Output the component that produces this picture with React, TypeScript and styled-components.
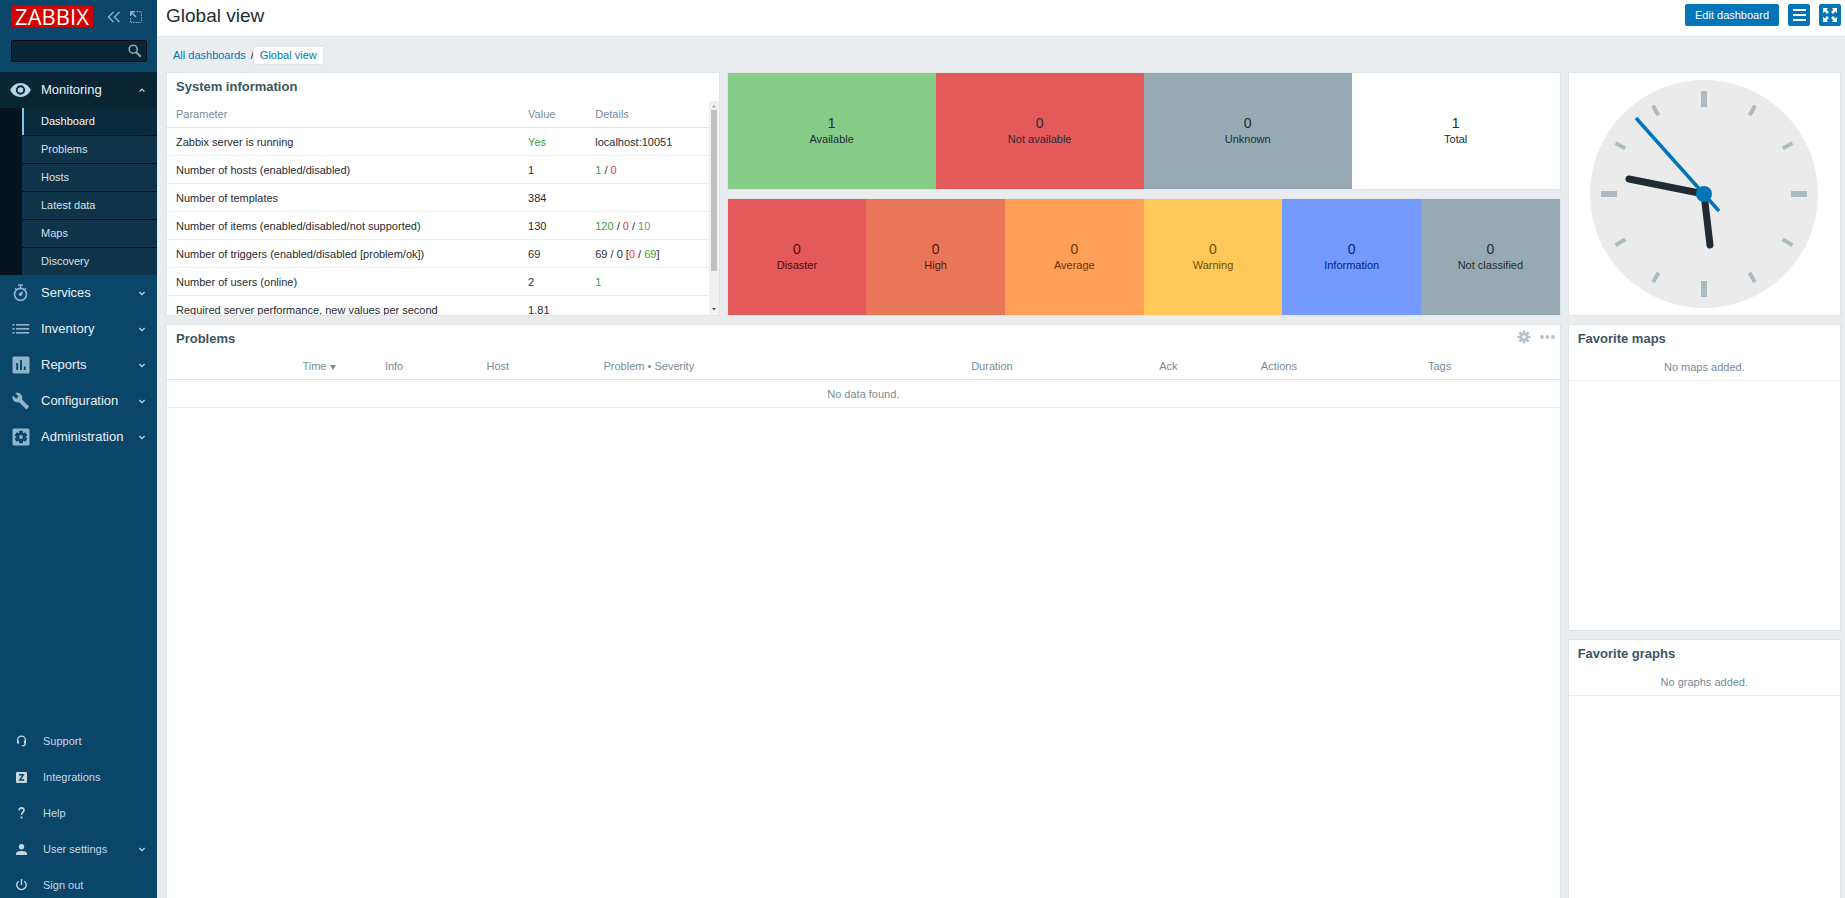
import React from "react";
import styled, { createGlobalStyle, css } from "styled-components";

const GlobalStyle = createGlobalStyle`
  * { box-sizing: border-box; }
  html, body, #root { height: 100%; }
  body {
    margin: 0;
    font-family: Arial, "Liberation Sans", sans-serif;
    font-size: 11px;
    line-height: 13px;
    color: #1f2c33;
    background: #e9edf0;
  }
  ul { list-style: none; margin: 0; padding: 0; }
  a { text-decoration: none; color: #0275b8; }
  h1, h4 { margin: 0; }
  button { font: inherit; cursor: pointer; }
`;

const Page = styled.div`
  display: flex;
  height: 100vh;
  overflow: hidden;
`;

/* Sidebar */

const Sidebar = styled.aside`
  flex: 0 0 157px;
  display: flex;
  flex-direction: column;
  background: #0a466a;
  color: #e9f1f6;
  overflow: hidden;
`;

const SidebarHeader = styled.div`
  display: flex;
  align-items: center;
  height: 33px;
  padding: 0 15px 0 11px;
`;

const Logo = styled.a`
  width: 82px;
  height: 21px;
  margin-right: 14px;
  background: #d40000;
  color: #fff;
  font-family: "Open Sans", "Noto Sans", sans-serif;
  font-size: 22px;
  line-height: 21px;
  text-align: center;
`;

const SidebarButton = styled.button`
  display: flex;
  padding: 0;
  border: 0;
  background: none;
  color: #8fb4ca;
  & + & { margin-left: 9px; }
`;

const SearchForm = styled.form`
  display: flex;
  align-items: center;
  height: 22px;
  margin: 7px 10px 10px 11px;
  padding-right: 4px;
  background: #0a2635;
  border: 1px solid #020c13;
  border-radius: 2px;
`;

const SearchInput = styled.input`
  flex: 1;
  min-width: 0;
  height: 20px;
  padding: 0 6px;
  border: 0;
  outline: 0;
  background: transparent;
  color: #e9f1f6;
  font: inherit;
`;

const MenuLink = styled.a<{ $open?: boolean }>`
  display: flex;
  align-items: center;
  height: 36px;
  padding: 0 11px 0 10px;
  font-size: 13px;
  line-height: 16px;
  color: #e9f1f6;
  svg:first-child { color: ${(p) => (p.$open ? "#b3d4ea" : "#8fb4ca")}; }
  ${(p) => p.$open && css`background: #0a2635;`}
`;

const MenuIcon = styled.span`
  display: flex;
  flex: 0 0 31px;
`;

const MenuLabel = styled.span`
  flex: 1;
`;

const SubMenu = styled.ul`
  padding-left: 22px;
  background: #04131c;
`;

const SubItem = styled.li`
  background: #0f3349;
  & + & { margin-top: 1px; }
`;

const SubLink = styled.a<{ $selected?: boolean }>`
  display: block;
  height: 27px;
  padding-left: 17px;
  border-left: 2px solid ${(p) => (p.$selected ? "#7dc5f5" : "transparent")};
  background: ${(p) => (p.$selected ? "#0a2a3d" : "transparent")};
  line-height: 27px;
  color: ${(p) => (p.$selected ? "#f2f7fa" : "#d5e0e8")};
`;

const UserMenu = styled.ul`
  margin: auto 0 -5px;
`;

const UserLink = styled.a`
  display: flex;
  align-items: center;
  height: 36px;
  padding: 0 11px 0 16px;
  color: #c6d7e2;
`;

const UserIcon = styled.span`
  display: flex;
  flex: 0 0 27px;
`;

/* Page content */

const Content = styled.div`
  flex: 1;
  min-width: 0;
  overflow-y: auto;
  scrollbar-width: none;
`;

const Header = styled.header`
  display: flex;
  align-items: center;
  height: 37px;
  padding: 0 4px 6px 9px;
  background: #fff;
  border-bottom: 1px solid #dfe4e7;
`;

const Title = styled.h1`
  flex: 1;
  padding-top: 2px;
  font-size: 19px;
  line-height: 24px;
  font-weight: normal;
`;

const HeaderButton = styled.button<{ $icon?: boolean }>`
  display: flex;
  align-items: center;
  justify-content: center;
  width: ${(p) => (p.$icon ? "22px" : "94px")};
  height: 22px;
  margin-left: 9px;
  padding: 0;
  border: 1px solid #0275b8;
  border-radius: 2px;
  background: #0275b8;
  color: #fff;
  line-height: 12px;
`;

const Crumbs = styled.nav`
  display: flex;
  align-items: center;
  height: 17px;
  margin: 10px 0 8px 16px;
`;

const CurrentCrumb = styled.a`
  height: 17px;
  padding: 0 6px;
  line-height: 17px;
  background: #fff;
  box-shadow: 0 0 0 1px #e2e7ea;
`;

const Slash = styled.span`
  margin-left: 5px;
`;

const Dashboard = styled.main`
  display: grid;
  grid-template-columns: repeat(6, 1fr);
  grid-auto-rows: 55px;
  gap: 8px 7px;
  padding: 0 4px 8px 9px;
`;

const Widget = styled.section<{ $cols: number; $rows: number }>`
  grid-column: span ${(p) => p.$cols};
  grid-row: span ${(p) => p.$rows};
  display: flex;
  flex-direction: column;
  min-width: 0;
  background: #fff;
  border: 1px solid #dfe4e7;
  overflow: hidden;
`;

const WidgetHead = styled.div`
  display: flex;
  align-items: center;
  height: 28px;
  padding: 0 5px 0 9px;
  flex: none;
`;

const WidgetTitle = styled.h4`
  flex: 1;
  font-size: 13px;
  line-height: 16px;
  color: #3c5563;
`;

const WidgetTool = styled.button`
  display: flex;
  padding: 0 0 4px;
  margin-left: 9px;
  border: 0;
  background: none;
  color: #b5c2ca;
`;

const ScrollArea = styled.div`
  display: flex;
  flex: 1;
  min-height: 0;
`;

const ScrollView = styled.div`
  flex: 1;
  overflow: hidden;
`;

const ScrollTrack = styled.div`
  display: flex;
  flex-direction: column;
  align-items: center;
  justify-content: space-between;
  width: 10px;
  padding: 4px 0;
  background: #f1f1f1;
`;

const ScrollThumb = styled.div`
  width: 6px;
  height: 161px;
  margin: 2px 0 auto;
  background: #c1c1c1;
`;

const Table = styled.table`
  width: 100%;
  border-collapse: separate;
  border-spacing: 0;
  table-layout: fixed;
`;

const Th = styled.th`
  height: 27px;
  padding: 0 0 0 9px;
  border-bottom: 1px solid #dfe4e7;
  color: #768d99;
  font-weight: normal;
  text-align: left;
  white-space: nowrap;
`;

const ThRight = styled(Th)`
  text-align: right;
`;

const Td = styled.td`
  height: 28px;
  padding: 2px 0 0 9px;
  border-bottom: 1px solid #ebeef0;
  white-space: nowrap;
`;

const Empty = styled.td`
  height: 28px;
  padding: 2px 0 0;
  border-bottom: 1px solid #ebeef0;
  color: #768d99;
  text-align: center;
`;

const Green = styled.span`
  color: #429e47;
`;
const Red = styled.span`
  color: #e33734;
`;
const Grey = styled.span`
  color: #768d99;
`;

const Tiles = styled.div`
  display: flex;
  flex: 1;
`;

const Tile = styled.div<{ $bg: string; $fg: string }>`
  flex: 1 1 0;
  display: flex;
  flex-direction: column;
  align-items: center;
  justify-content: center;
  padding-bottom: 4px;
  background: ${(p) => p.$bg};
  color: ${(p) => p.$fg};
`;

const Count = styled.span`
  font-size: 14px;
  line-height: 20px;
`;

const ClockBox = styled.div`
  flex: 1;
  display: flex;
  align-items: center;
  justify-content: center;
`;

/* Icons */

const Chevron = ({ up }: { up?: boolean }) => (
  <svg width="8" height="6" viewBox="0 0 8 6" fill="none" stroke="#c4d8e4" strokeWidth="1.2" aria-hidden="true">
    <path d={up ? "M1.6 4.6 4 2.200 6.400 4.600" : "M1.400 2 4 4.600 6.600 2"} />
  </svg>
);

const EyeIcon = () => (
  <svg width="21" height="14" viewBox="1 4.500 22 15" fill="currentColor" aria-hidden="true">
    <path d="M12 4.500C7 4.500 2.700 7.600 1 12c1.700 4.400 6 7.500 11 7.500s9.300-3.100 11-7.500C21.300 7.600 17 4.500 12 4.500zM12 17a5 5 0 1 1 0-10 5 5 0 0 1 0 10zm0-8a3 3 0 1 0 0 6 3 3 0 0 0 0-6z" />
  </svg>
);

const StopwatchIcon = () => (
  <svg width="20" height="18" viewBox="0 0 20 18" fill="none" stroke="currentColor" aria-hidden="true">
    <circle cx="10.500" cy="10.300" r="6" strokeWidth="1.700" />
    <path d="M8 1h5M10.500 1v3M5.100 4.300l1.200 1.200M15.900 4.300l-1.200 1.200" strokeWidth="1.600" />
    <path d="M13.300 7.200 12 11a1.700 1.700 0 1 1-2.300-2.200z" fill="currentColor" stroke="none" />
  </svg>
);

const ListIcon = () => (
  <svg width="20" height="12" viewBox="0 0 20 12" fill="currentColor" aria-hidden="true">
    {[1, 5, 9].map((y) => (
      <React.Fragment key={y}>
        <rect x="2.500" y={y} width="2" height="1.600" />
        <rect x="6" y={y} width="13.200" height="1.600" />
      </React.Fragment>
    ))}
  </svg>
);

const ReportIcon = () => (
  <svg width="20" height="18" viewBox="0 0 20 18" aria-hidden="true">
    <rect x="2.500" y="0.500" width="17" height="17" rx="1.600" fill="currentColor" />
    <path d="M7.200 7v7M11 4v10M14.800 10.500V14" stroke="#0a466a" strokeWidth="1.900" />
  </svg>
);

const WrenchIcon = () => (
  <svg width="20" height="18" viewBox="-2 0 26 24" preserveAspectRatio="xMidYMid meet" fill="currentColor" aria-hidden="true">
    <path d="M22.700 19l-9.100-9.100c.9-2.300.4-5-1.500-6.900-2-2-5-2.400-7.400-1.300L9 6 6 9 1.600 4.700C.4 7.100.9 10.100 2.900 12.100c1.900 1.900 4.600 2.400 6.900 1.500l9.100 9.100c.4.4 1 .4 1.400 0l2.300-2.300c.5-.4.5-1.100.1-1.400z" />
  </svg>
);

const AdminIcon = () => (
  <svg width="20" height="18" viewBox="0 0 20 18" aria-hidden="true">
    <rect x="2.500" y="0.500" width="17" height="17" rx="1.600" fill="currentColor" />
    {[0, 60, 120].map((a) => (
      <rect key={a} x="9" y="2.800" width="4" height="12.400" rx="0.600" fill="#0a466a" transform={`rotate(${a} 11 9)`} />
    ))}
    <circle cx="11" cy="9" r="4.600" fill="#0a466a" />
    <circle cx="11" cy="9" r="1.900" fill="currentColor" />
  </svg>
);

const SearchIcon = () => (
  <svg width="14" height="14" viewBox="0 0 14 14" fill="none" stroke="#8fa9b8" aria-hidden="true">
    <circle cx="5.200" cy="5.200" r="4" strokeWidth="1.600" />
    <path d="M8.200 8.200 12.800 12.800" strokeWidth="2" />
  </svg>
);

const CollapseIcon = () => (
  <svg width="14" height="12" viewBox="0 0 14 12" fill="none" stroke="currentColor" strokeWidth="1.400" aria-hidden="true">
    <path d="M6.500 1 1.500 6l5 5M12.500 1l-5 5 5 5" />
  </svg>
);

const CompactIcon = () => (
  <svg width="12" height="12" viewBox="0 0 12 12" fill="none" stroke="currentColor" aria-hidden="true">
    <path d="M6.500 .6h5M11.400 1v10.400M.6 11.400H11M.6 7v4" strokeWidth="1" strokeDasharray="1.500 1" />
    <path d="M.8 5V.8H5M1 1l5 5" strokeWidth="1.500" />
  </svg>
);

const HeadsetIcon = () => (
  <svg width="11" height="12" viewBox="0 0 11 12" fill="none" stroke="currentColor" aria-hidden="true">
    <path d="M1.600 6.500V5a3.900 3.900 0 0 1 7.800 0v3.300c0 1.700-1 2.600-3.400 2.700" strokeWidth="1.200" />
    <path d="M2 5.500v3M9 5.500v3" strokeWidth="2" />
  </svg>
);

const IntegrationIcon = () => (
  <svg width="11" height="11" viewBox="0 0 11 11" aria-hidden="true">
    <rect width="11" height="11" rx="1" fill="currentColor" />
    <path d="M3 2.800h4.200L3.800 8h4.300" fill="none" stroke="#0a466a" strokeWidth="1.500" />
  </svg>
);

const HelpIcon = () => (
  <svg width="11" height="12" viewBox="0 0 11 12" fill="none" stroke="currentColor" aria-hidden="true">
    <path d="M3 3.600C3 1.800 4.200.9 5.500.9S8 1.800 8 3.300C8 5.200 5.500 5.200 5.500 8" strokeWidth="1.600" />
    <path d="M5.500 9.500v2" strokeWidth="1.800" />
  </svg>
);

const PersonIcon = () => (
  <svg width="11" height="11" viewBox="0 0 11 11" fill="currentColor" aria-hidden="true">
    <circle cx="5.500" cy="2.700" r="2.700" />
    <path d="M0 11V9.600C0 7.800 3 7 5.500 7s5.500.8 5.500 2.600V11z" />
  </svg>
);

const PowerIcon = () => (
  <svg width="11" height="12" viewBox="0 0 11 12" fill="none" stroke="currentColor" strokeWidth="1.400" aria-hidden="true">
    <path d="M5.500 0v6M2.600 2.200a4.700 4.700 0 1 0 5.800 0" />
  </svg>
);

const MenuBars = () => (
  <svg width="13" height="12" viewBox="0 0 13 12" aria-hidden="true">
    <path d="M0 1h13M0 6h13M0 11h13" stroke="currentColor" strokeWidth="2" />
  </svg>
);

const FullscreenIcon = () => (
  <svg width="14" height="14" viewBox="0 0 13 13" fill="currentColor" aria-hidden="true">
    {[0, 90, 180, 270].map((a) => (
      <path key={a} transform={`rotate(${a} 6.500 6.500)`} d="M0 0h4.800L3.300 1.500 5.500 3.700 3.700 5.500 1.500 3.300 0 4.800z" />
    ))}
  </svg>
);

const CogIcon = () => (
  <svg width="14" height="14" viewBox="0 0 14 14" aria-hidden="true">
    {[0, 45, 90, 135].map((a) => (
      <rect key={a} x="5.800" y="0.500" width="2.400" height="13" fill="currentColor" transform={`rotate(${a} 7 7)`} />
    ))}
    <circle cx="7" cy="7" r="4.500" fill="currentColor" />
    <circle cx="7" cy="7" r="1.800" fill="#fff" />
  </svg>
);

const DotsIcon = () => (
  <svg width="15" height="14" viewBox="0 0 15 14" fill="currentColor" aria-hidden="true">
    <circle cx="2" cy="7" r="1.900" />
    <circle cx="7.500" cy="7" r="1.900" />
    <circle cx="13" cy="7" r="1.900" />
  </svg>
);

const ScrollArrow = ({ down }: { down?: boolean }) => (
  <svg width="4" height="3" viewBox="0 0 4 3" fill={down ? "#505050" : "#a3a3a3"} aria-hidden="true">
    <path d={down ? "M0 0h4L2 2.500z" : "M0 2.500h4L2 0z"} />
  </svg>
);

const SortArrow = () => (
  <svg width="6" height="5" viewBox="0 0 6 5" fill="#768d99" aria-hidden="true">
    <path d="M0 0h6L3 5z" />
  </svg>
);

const Clock = () => (
  <svg width="228" height="228" viewBox="0 0 228 228" role="img" aria-label="Local time">
    <circle cx="114" cy="114" r="114" fill="#ebebeb" />
    {Array.from({ length: 12 }, (_, i) => {
      const major = i % 3 === 0;
      return (
        <rect
          key={i}
          x={major ? 111 : 112}
          y={major ? 11 : 12}
          width={major ? 6 : 4}
          height={major ? 16 : 11}
          fill="#acbbc2"
          transform={`rotate(${i * 30} 114 114)`}
        />
      );
    })}
    <g strokeLinecap="round" stroke="#1f2c33" strokeWidth="7">
      <path d="M114 114 120 165" />
      <path d="M114 114 39 99" />
    </g>
    <path d="M129 131 46 38" stroke="#0275b8" strokeWidth="3.500" />
    <circle cx="114" cy="114" r="8" fill="#0275b8" />
  </svg>
);

/* Data */

const subItems = ["Dashboard", "Problems", "Hosts", "Latest data", "Maps", "Discovery"];

const sections = [
  { label: "Services", icon: <StopwatchIcon /> },
  { label: "Inventory", icon: <ListIcon /> },
  { label: "Reports", icon: <ReportIcon /> },
  { label: "Configuration", icon: <WrenchIcon /> },
  { label: "Administration", icon: <AdminIcon /> },
];

const userItems = [
  { label: "Support", icon: <HeadsetIcon /> },
  { label: "Integrations", icon: <IntegrationIcon /> },
  { label: "Help", icon: <HelpIcon /> },
  { label: "User settings", icon: <PersonIcon />, expandable: true },
  { label: "Sign out", icon: <PowerIcon /> },
];

const infoRows: [string, React.ReactNode, React.ReactNode][] = [
  ["Zabbix server is running", <Green>Yes</Green>, "localhost:10051"],
  ["Number of hosts (enabled/disabled)", "1", <><Green>1</Green> / <Red>0</Red></>],
  ["Number of templates", "384", ""],
  ["Number of items (enabled/disabled/not supported)", "130", <><Green>120</Green> / <Red>0</Red> / <Grey>10</Grey></>],
  ["Number of triggers (enabled/disabled [problem/ok])", "69", <>69 / 0 [<Red>0</Red> / <Green>69</Green>]</>],
  ["Number of users (online)", "2", <Green>1</Green>],
  ["Required server performance, new values per second", "1.81", ""],
];

const availability = [
  { label: "Available", count: 1, bg: "#86cc89", fg: "#1f2c33" },
  { label: "Not available", count: 0, bg: "#e45959", fg: "#1f2c33" },
  { label: "Unknown", count: 0, bg: "#97aab3", fg: "#1f2c33" },
  { label: "Total", count: 1, bg: "#ffffff", fg: "#1f2c33" },
];

const severities = [
  { label: "Disaster", count: 0, bg: "#e45959", fg: "#4b0c0c" },
  { label: "High", count: 0, bg: "#e97659", fg: "#52190b" },
  { label: "Average", count: 0, bg: "#ffa059", fg: "#733100" },
  { label: "Warning", count: 0, bg: "#ffc859", fg: "#734d00" },
  { label: "Information", count: 0, bg: "#7499ff", fg: "#00268e" },
  { label: "Not classified", count: 0, bg: "#97aab3", fg: "#1f2c33" },
];

const TileRow = ({ items }: { items: typeof availability }) => (
  <Tiles>
    {items.map((t) => (
      <Tile key={t.label} $bg={t.bg} $fg={t.fg}>
        <Count>{t.count}</Count>
        <span>{t.label}</span>
      </Tile>
    ))}
  </Tiles>
);

const FavoriteWidget = ({ title, message }: { title: string; message: string }) => (
  <Widget $cols={1} $rows={5}>
    <WidgetHead>
      <WidgetTitle>{title}</WidgetTitle>
    </WidgetHead>
    <Table>
      <tbody>
        <tr>
          <Empty>{message}</Empty>
        </tr>
      </tbody>
    </Table>
  </Widget>
);

export default function App() {
  return (
    <>
      <GlobalStyle />
      <Page>
        <Sidebar>
          <SidebarHeader>
            <Logo href="#">ZABBIX</Logo>
            <SidebarButton aria-label="Collapse sidebar"><CollapseIcon /></SidebarButton>
            <SidebarButton aria-label="Hide sidebar"><CompactIcon /></SidebarButton>
          </SidebarHeader>
          <SearchForm role="search">
            <SearchInput type="text" aria-label="Search" />
            <SidebarButton type="button" aria-label="Search"><SearchIcon /></SidebarButton>
          </SearchForm>
          <nav>
            <MenuLink href="#" $open>
              <MenuIcon><EyeIcon /></MenuIcon>
              <MenuLabel>Monitoring</MenuLabel>
              <Chevron up />
            </MenuLink>
            <SubMenu>
              {subItems.map((label, i) => (
                <SubItem key={label}>
                  <SubLink href="#" $selected={i === 0}>{label}</SubLink>
                </SubItem>
              ))}
            </SubMenu>
            {sections.map((s) => (
              <MenuLink href="#" key={s.label}>
                <MenuIcon>{s.icon}</MenuIcon>
                <MenuLabel>{s.label}</MenuLabel>
                <Chevron />
              </MenuLink>
            ))}
          </nav>
          <UserMenu>
            {userItems.map((u) => (
              <li key={u.label}>
                <UserLink href="#">
                  <UserIcon>{u.icon}</UserIcon>
                  <MenuLabel>{u.label}</MenuLabel>
                  {u.expandable && <Chevron />}
                </UserLink>
              </li>
            ))}
          </UserMenu>
        </Sidebar>
        <Content>
          <Header>
            <Title>Global view</Title>
            <HeaderButton>Edit dashboard</HeaderButton>
            <HeaderButton $icon aria-label="Actions"><MenuBars /></HeaderButton>
            <HeaderButton $icon aria-label="Kiosk mode"><FullscreenIcon /></HeaderButton>
          </Header>
          <Crumbs>
            <a href="#">All dashboards</a>
            <Slash>/</Slash>
            <CurrentCrumb href="#">Global view</CurrentCrumb>
          </Crumbs>
          <Dashboard>
            <Widget $cols={2} $rows={4}>
              <WidgetHead>
                <WidgetTitle>System information</WidgetTitle>
              </WidgetHead>
              <ScrollArea>
                <ScrollView>
                  <Table>
                    <colgroup>
                      <col />
                      <col style={{ width: "12.400%" }} />
                      <col style={{ width: "22.600%" }} />
                    </colgroup>
                    <thead>
                      <tr>
                        <Th>Parameter</Th>
                        <Th>Value</Th>
                        <Th>Details</Th>
                      </tr>
                    </thead>
                    <tbody>
                      {infoRows.map(([name, value, details]) => (
                        <tr key={name}>
                          <Td>{name}</Td>
                          <Td>{value}</Td>
                          <Td>{details}</Td>
                        </tr>
                      ))}
                    </tbody>
                  </Table>
                </ScrollView>
                <ScrollTrack>
                  <ScrollArrow />
                  <ScrollThumb />
                  <ScrollArrow down />
                </ScrollTrack>
              </ScrollArea>
            </Widget>
            <Widget $cols={3} $rows={2}>
              <TileRow items={availability} />
            </Widget>
            <Widget $cols={1} $rows={4}>
              <ClockBox><Clock /></ClockBox>
            </Widget>
            <Widget $cols={3} $rows={2}>
              <TileRow items={severities} />
            </Widget>
            <Widget $cols={5} $rows={10}>
              <WidgetHead>
                <WidgetTitle>Problems</WidgetTitle>
                <WidgetTool aria-label="Edit"><CogIcon /></WidgetTool>
                <WidgetTool aria-label="Actions"><DotsIcon /></WidgetTool>
              </WidgetHead>
              <Table>
                <colgroup>
                  <col style={{ width: "12.100%" }} />
                  <col style={{ width: "2.900%" }} />
                  <col style={{ width: "7.300%" }} />
                  <col style={{ width: "8.400%" }} />
                  <col style={{ width: "26.400%" }} />
                  <col style={{ width: "13.500%" }} />
                  <col style={{ width: "7.300%" }} />
                  <col style={{ width: "12%" }} />
                  <col />
                </colgroup>
                <thead>
                  <tr>
                    <ThRight>Time <SortArrow /></ThRight>
                    <Th />
                    <Th>Info</Th>
                    <Th>Host</Th>
                    <Th>Problem • Severity</Th>
                    <Th>Duration</Th>
                    <Th>Ack</Th>
                    <Th>Actions</Th>
                    <Th>Tags</Th>
                  </tr>
                </thead>
                <tbody>
                  <tr>
                    <Empty colSpan={9}>No data found.</Empty>
                  </tr>
                </tbody>
              </Table>
            </Widget>
            <FavoriteWidget title="Favorite maps" message="No maps added." />
            <FavoriteWidget title="Favorite graphs" message="No graphs added." />
          </Dashboard>
        </Content>
      </Page>
    </>
  );
}
